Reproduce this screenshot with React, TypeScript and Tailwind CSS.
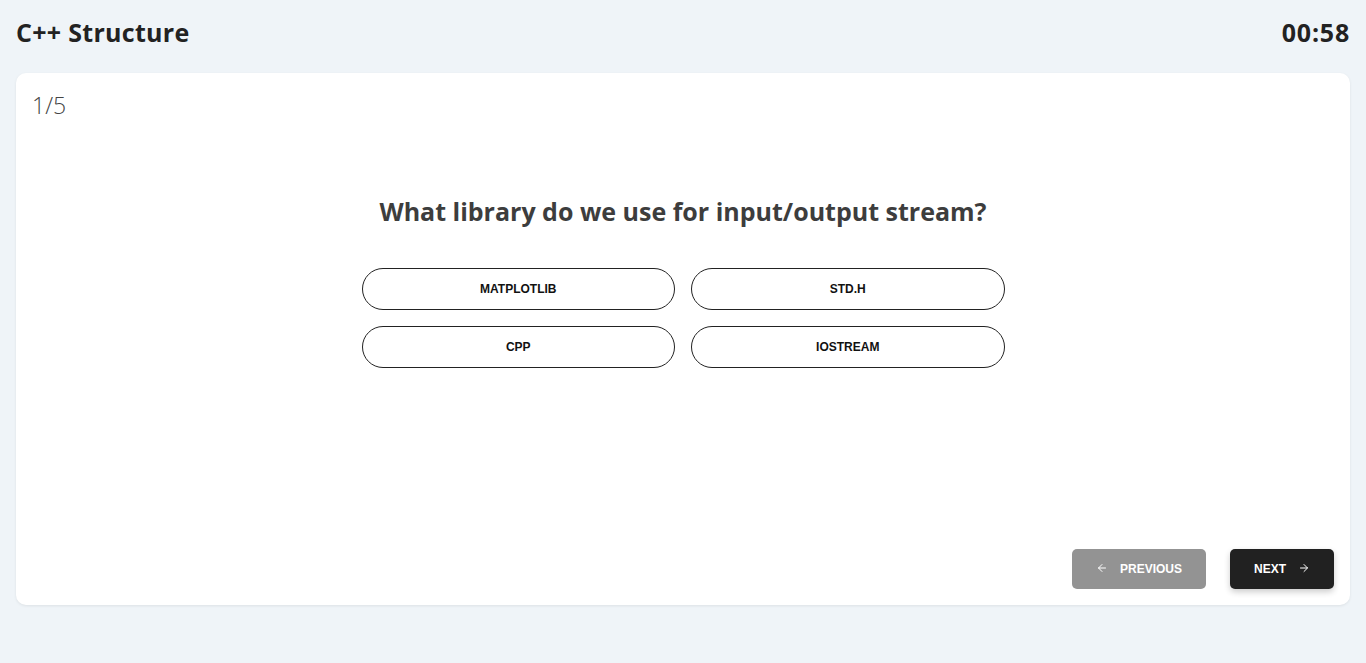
import { ArrowLeft, ArrowRight } from "lucide-react";

const options = ["MATPLOTLIB", "STD.H", "CPP", "IOSTREAM"];

export default function App() {
  return (
    <div className="min-h-screen bg-[#eff4f8] px-4 pb-[58px] font-['Open_Sans','Noto_Sans',sans-serif]">
      {/* Header */}
      <div className="h-[73px] flex items-center justify-between pb-[10px]">
        <h1 className="text-[25px] font-bold text-[#222] leading-8 tracking-[0.3px]">C++ Structure</h1>
        <span className="text-[25px] font-bold text-[#222] leading-8 tracking-[0.8px]">00:58</span>
      </div>

      {/* Quiz card */}
      <div className="bg-white rounded-[10px] shadow-[0_1px_3px_rgba(0,0,0,0.08)] h-[532px] flex flex-col px-4 pt-[17px] pb-4">
        <div className="text-[23px] font-light text-[#444] leading-[30px]">1/5</div>

        <div className="flex-1 flex flex-col items-center">
          <h2 className="mt-[74px] text-[25px] font-bold text-[#3d3d3d] leading-[34px]">
            What library do we use for input/output stream?
          </h2>
          <div className="mt-[40px] grid grid-cols-2 gap-4 w-[643px]">
            {options.map((o) => (
              <button
                key={o}
                className="h-[42px] rounded-full border border-[#222] bg-white text-[12px] font-bold text-[#111] font-['Liberation_Sans',Arial,sans-serif]"
              >
                {o}
              </button>
            ))}
          </div>
        </div>

        <div className="flex justify-end gap-6 font-['Liberation_Sans',Arial,sans-serif]">
          <button className="h-10 w-[134px] rounded-[5px] bg-[#939393] text-white text-[12px] font-bold flex items-center justify-center gap-3">
            <ArrowLeft size={12} strokeWidth={2} className="-mt-[3px]" />
            PREVIOUS
          </button>
          <button className="h-10 w-[104px] rounded-[5px] bg-[#212121] text-white text-[12px] font-bold flex items-center justify-center gap-3 shadow-[0_3px_6px_rgba(0,0,0,0.2)]">
            NEXT
            <ArrowRight size={12} strokeWidth={2} className="-mt-[3px]" />
          </button>
        </div>
      </div>
    </div>
  );
}
